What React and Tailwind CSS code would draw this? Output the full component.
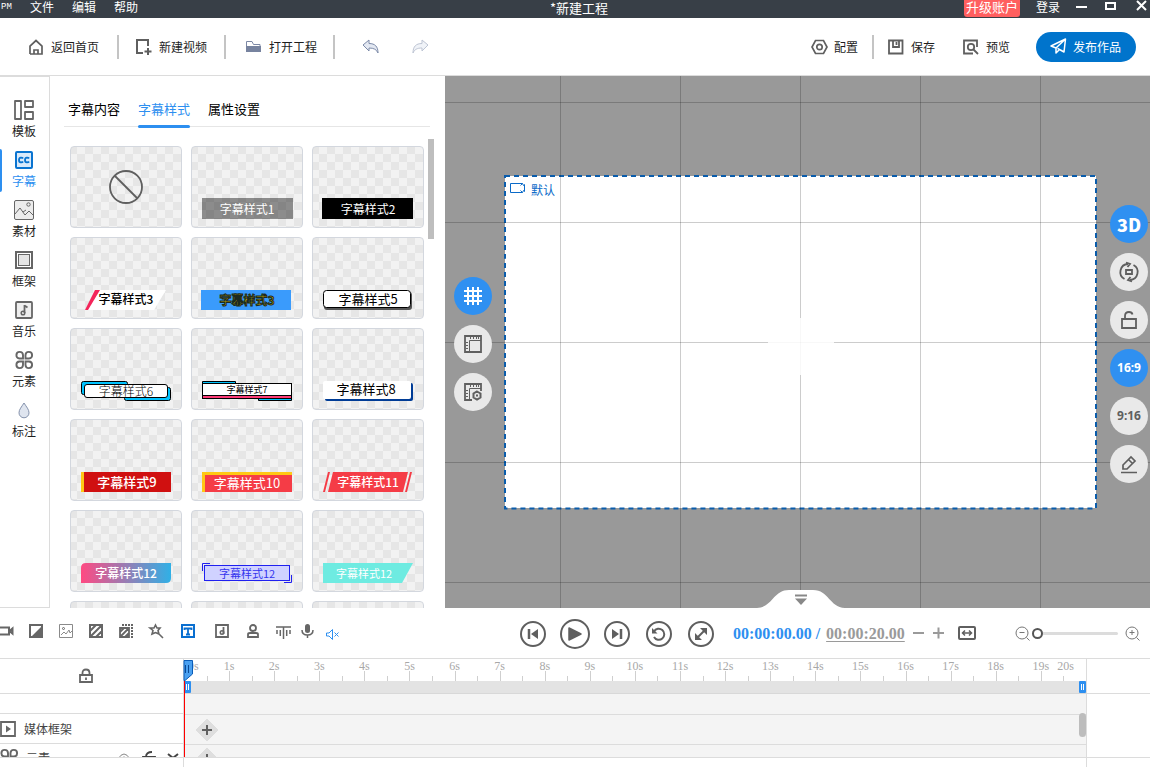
import clsx from "clsx";

const SIDE_ITEMS = [
  { label: "模板", icon: TemplateIcon },
  { label: "字幕", icon: CaptionIcon, active: true },
  { label: "素材", icon: PictureIcon },
  { label: "框架", icon: FrameIcon },
  { label: "音乐", icon: MusicIcon },
  { label: "元素", icon: ElementIcon },
  { label: "标注", icon: DropIcon },
];

const TABS = ["字幕内容", "字幕样式", "属性设置"];

const CAPTION_STYLES = [
  { none: true },
  { label: "字幕样式1", text: "text-xs leading-5 text-white", art: <rect y="-1" width="91" height="21" fill="#000" fillOpacity=".42" /> },
  { label: "字幕样式2", text: "text-xs leading-5 text-white", art: <rect x="-1" y="-1" width="91" height="21" fill="#000" /> },
  {
    label: "字幕样式3",
    text: "text-xs leading-[18px] font-medium text-black",
    art: (
      <>
        <path d="M17 0h68l-12 20H5z" fill="#fff" />
        <path d="M14 0h5L7 20H4z" fill="#f4255a" />
      </>
    ),
  },
  {
    label: "字幕样式3",
    text: "text-xs leading-5 font-bold text-[#c0a800] [-webkit-text-stroke:1px_#1c2a20]",
    art: <rect x="-1" width="90" height="20" fill="#3a9bfc" />,
  },
  {
    label: "字幕样式5",
    text: "text-[13px] leading-[18px] text-black",
    art: (
      <>
        <rect x="1" y="2" width="88" height="18" rx="3" fill="#555" />
        <rect x=".5" y=".5" width="87" height="17" rx="3" fill="#fff" stroke="#000" />
      </>
    ),
  },
  {
    label: "字幕样式6",
    text: "text-xs leading-5 font-light text-black",
    art: (
      <>
        <rect x=".5" y=".5" width="46" height="13" rx="2" fill="#00c3ff" stroke="#000" />
        <rect x="43.5" y="6.5" width="46" height="13" rx="2" fill="#00c3ff" stroke="#000" />
        <rect x="3.5" y="3.5" width="83" height="13" rx="2.5" fill="#fff" stroke="#000" />
      </>
    ),
  },
  {
    label: "字幕样式7",
    text: "text-[9px] leading-[18px] text-black",
    art: (
      <>
        <path d="M.5 4V.5h33V4M56.5 16v3.500h33V16" fill="#00c3ff" stroke="#000" />
        <rect x=".5" y="2.500" width="89" height="15" fill="#fff" stroke="#000" />
        <path d="M1 14.500h88v2.500H1z" fill="#ff3c78" />
        <path d="M1 14.500h88" stroke="#000" />
      </>
    ),
  },
  {
    label: "字幕样式8",
    text: "pr-1 text-[13px] leading-[16px] text-black",
    art: (
      <>
        <rect x="2" y="2" width="88" height="18" rx="2" fill="#003c96" />
        <rect width="88" height="18" rx="2" fill="#fff" />
      </>
    ),
  },
  {
    label: "字幕样式9",
    text: "pl-[2px] text-[13px] leading-5 font-medium text-white",
    art: (
      <>
        <path d="M0 0h3v20H0z" fill="#ffc814" />
        <path d="M3 0h87v20H3z" fill="#d01010" />
      </>
    ),
  },
  {
    label: "字幕样式10",
    text: "text-[13px] leading-[22px] text-white",
    art: (
      <>
        <path d="M0 0h90v20H0z" fill="#ffc814" />
        <path d="M3 3h87v17H3z" fill="#f53c46" />
      </>
    ),
  },
  {
    label: "字幕样式11",
    text: "text-xs leading-5 font-medium text-white",
    art: <path d="M5 0h2L2 20H0zM10 0h75l-5 20H5zM87 0h2l-5 20h-2z" fill="#f53c46" />,
  },
  {
    label: "字幕样式12",
    text: "text-xs leading-5 font-medium text-white",
    art: (
      <>
        <defs>
          <linearGradient id="pink-blue">
            <stop offset="0" stopColor="#ff4a82" />
            <stop offset="1" stopColor="#30b0e6" />
          </linearGradient>
        </defs>
        <path d="M5 0h85v15q0 5-5 5H0V5q0-5 5-5" fill="url(#pink-blue)" />
      </>
    ),
  },
  {
    label: "字幕样式12",
    text: "text-[11px] leading-5 text-[#3434ee]",
    art: (
      <>
        <rect x="2.500" y="2.500" width="85" height="15" fill="#d0d2ff" stroke="#2020f0" />
        <path d="M.5 8V.5H8M89.500 12v7.500H82" fill="none" stroke="#2020f0" />
      </>
    ),
  },
  {
    label: "字幕样式12",
    text: "pr-2 text-[11px] leading-5 text-white",
    art: <path d="M0 0h90L79 20H0z" fill="#6eebe1" />,
  },
  {},
  {},
  {},
];

const SECONDS = Array.from({ length: 20 }, (_, i) => i);

export default function App() {
  return (
    <div className="flex h-screen flex-col overflow-hidden bg-white font-['Noto_Sans_CJK_SC',sans-serif] text-xs text-[#1e1e1e]">
      <TitleBar />
      <Toolbar />
      <main className="flex min-h-0 flex-1">
        <Sidebar />
        <StylePanel />
        <Stage />
      </main>
      <PlayerBar />
      <Timeline />
    </div>
  );
}

function Icon({ w = 16, h = w, className, children }) {
  return (
    <svg
      width={w}
      height={h}
      viewBox={`0 0 ${w} ${h}`}
      fill="none"
      stroke="currentColor"
      className={clsx("shrink-0 overflow-visible", className)}
      aria-hidden="true"
    >
      {children}
    </svg>
  );
}

function TitleBar() {
  return (
    <header className="grid h-[18px] shrink-0 grid-cols-[1fr_auto_1fr] bg-[#383f47] text-white">
      <nav className="flex items-start gap-[18px]">
        <span className="w-3 pl-px font-['Liberation_Mono',monospace] text-[9px] leading-[14px]">PM</span>
        <button className="leading-[14px]">文件</button>
        <button className="leading-[14px]">编辑</button>
        <button className="leading-[14px]">帮助</button>
      </nav>
      <h1 className="pl-2 text-[13px] leading-[15px]">*新建工程</h1>
      <div className="flex items-start justify-end pr-[3px]">
        <button className="h-[17px] rounded-b-[3px] bg-[#ff5f5f] px-[2px] pb-1 text-[13px] leading-[13px]">升级账户</button>
        <button className="ml-4 leading-[14px]">登录</button>
        <button aria-label="最小化" className="ml-4">
          <Icon w={11} h={14}><path d="M0 7h11" strokeWidth="2" /></Icon>
        </button>
        <button aria-label="最大化" className="ml-[18px]">
          <Icon w={11} h={14}><path d="M1 3h9v6H1z" strokeWidth="2" /></Icon>
        </button>
        <button aria-label="关闭" className="ml-5">
          <Icon w={11} h={14}><path d="m1 1 9 9M10 1l-9 9" strokeWidth="2" /></Icon>
        </button>
      </div>
    </header>
  );
}

function Divider() {
  return <span className="block h-6 w-[2px] bg-[#c4c4c4]" />;
}

function Toolbar() {
  return (
    <div className="flex h-[58px] shrink-0 items-center justify-between border-b border-[#dcdcdc] pr-[14px] pl-7">
      <div className="flex items-center">
        <button className="flex items-center gap-[7px]">
          <Icon w={16} className="text-[#5f5f5f]">
            <path d="M2 15V7l6-5.500L14 7v8H2M6 15v-4h4v4" strokeWidth="1.700" />
          </Icon>
          返回首页
        </button>
        <span className="pr-[17px] pl-[18px]"><Divider /></span>
        <button className="flex items-center gap-[7px]">
          <Icon w={16} className="text-[#5f5f5f]">
            <path d="M12 7V1H1v13h6M12 9v7M8.500 12.500h7" strokeWidth="2" />
          </Icon>
          新建视频
        </button>
        <span className="pr-5 pl-[17px]"><Divider /></span>
        <button className="flex items-center gap-2">
          <Icon w={15}>
            <path d="M.5 13V2.500h5.500l1.500 3H14V8" stroke="#7c88a5" />
            <path d="M0 7h15v6H0z" fill="#77839f" stroke="none" />
          </Icon>
          打开工程
        </button>
        <span className="pr-[27px] pl-4"><Divider /></span>
        <button aria-label="撤销"><UndoIcon /></button>
        <button aria-label="重做" className="ml-[33px] opacity-50"><UndoIcon className="-scale-x-100" /></button>
      </div>
      <div className="flex items-center">
        <button className="flex items-center gap-[6px]">
          <Icon w={17} h={16} className="text-[#5f5f5f]">
            <path d="M4.500 1.500h8l3.500 6.500-3.500 6.500h-8L1 8z" strokeWidth="1.700" />
            <circle cx="8.500" cy="8" r="2.700" strokeWidth="1.700" />
          </Icon>
          配置
        </button>
        <span className="px-[14px]"><Divider /></span>
        <button className="flex items-center gap-[7px]">
          <Icon w={16} className="text-[#5f5f5f]">
            <path d="M1 1.500h13.500v13H1zM5 2v6h6V2M8.500 3v3" strokeWidth="1.800" />
          </Icon>
          保存
        </button>
        <button className="ml-7 flex items-center gap-[7px]">
          <Icon w={16} className="text-[#5f5f5f]">
            <path d="M14 8V1.500H1v13h9M10.500 10.500l4.500 4.500" strokeWidth="1.800" />
            <circle cx="8" cy="8" r="3.200" strokeWidth="1.800" />
          </Icon>
          预览
        </button>
        <button className="ml-[26px] flex h-[30px] items-center gap-[6px] rounded-full bg-[#0074cc] pr-[15px] pl-[14px] text-white">
          <Icon w={17}>
            <path d="M1 8 15.500 1l-1.500 13-4.500-2.500L6 15V10zM15.500 1 6 10M9.500 11.500l-2-1.200" strokeWidth="1.500" strokeLinejoin="round" />
          </Icon>
          发布作品
        </button>
      </div>
    </div>
  );
}

function UndoIcon({ className }) {
  return (
    <Icon w={17} h={15} className={className}>
      <path d="M1 6 7 1v3.500c6 0 9 3 9 9.500-1.500-3.500-4-5-9-5V12z" fill="#e3e8f2" stroke="#7c8aa8" />
    </Icon>
  );
}

function Sidebar() {
  return (
    <nav className="w-[50px] shrink-0 border-t border-r border-b border-[#dcdcdc] pt-5">
      {SIDE_ITEMS.map(({ label, icon: Glyph, active }) => (
        <button
          key={label}
          className={clsx("relative flex h-[50px] w-full flex-col items-center pr-[1px]", active && "text-[#2d8ff0]")}
        >
          {active && <span className="absolute top-[2px] left-0 h-[43px] w-[2px] rounded-r bg-[#2d8ff0]" />}
          <span className="flex h-[26px] items-center">
            <Glyph />
          </span>
          <span className="leading-4">{label}</span>
        </button>
      ))}
    </nav>
  );
}

function TemplateIcon() {
  return (
    <Icon w={20} className="text-[#666]">
      <path d="M1 1h6v18H1zM11 1h8v6h-8zM11 12h8v7h-8z" strokeWidth="1.800" strokeLinejoin="round" />
    </Icon>
  );
}

function CaptionIcon() {
  return (
    <Icon w={18}>
      <rect x="1" y="1" width="16" height="16" rx="1" fill="#d9eafb" stroke="#0a74d0" strokeWidth="2" />
      <path d="M8 7.500C7.500 6.500 4 5.500 4 9s3.500 2.500 4 1.500M14 7.500c-.5-1-4-2-4 1.500s3.500 2.500 4 1.500" stroke="#0a74d0" strokeWidth="1.800" />
    </Icon>
  );
}

function PictureIcon() {
  return (
    <Icon w={20} className="text-[#666]">
      <rect x=".5" y=".5" width="19" height="19" rx="1.500" fill="#ececec" />
      <path d="m1 14 5-6 5 7 4-4 4 4M9 12l3-2" />
      <circle cx="14.500" cy="4.500" r="1.700" />
    </Icon>
  );
}

function FrameIcon() {
  return (
    <Icon w={18} className="text-[#666]">
      <rect x="1" y="1" width="16" height="16" strokeWidth="2" />
      <rect x="3.500" y="3.500" width="11" height="11" fill="#e4e4e4" />
    </Icon>
  );
}

function MusicIcon() {
  return (
    <Icon w={18} className="text-[#666]">
      <rect x="1" y="1" width="16" height="16" rx="1" fill="#eee" strokeWidth="1.800" />
      <path d="M9.500 12V4M9.500 4.500l3 2" strokeWidth="1.800" />
      <circle cx="8" cy="12" r="1.800" strokeWidth="1.500" />
    </Icon>
  );
}

function ElementIcon() {
  return (
    <Icon w={18} className="text-[#666]">
      <path
        d="M8 7.500H4.500A3.300 3.300 0 1 1 8 4zM10.500 7.500V4a3.300 3.300 0 1 1 3.500 3.500zM8 10.500V14a3.300 3.300 0 1 1-3.500-3.500zM10.500 10.500H14a3.300 3.300 0 1 1-3.500 3.500z"
        strokeWidth="1.900"
      />
    </Icon>
  );
}

function DropIcon() {
  return (
    <Icon w={12} h={17}>
      <path d="M6 1c2.500 4 5 6.500 5 9.800a5 5 0 0 1-10 0C1 7.500 3.500 5 6 1z" fill="#dfe5ef" stroke="#8391ab" />
    </Icon>
  );
}

function StylePanel() {
  return (
    <section className="relative flex w-[395px] shrink-0 flex-col overflow-hidden pr-[15px] pl-[14px]">
      <div role="tablist" className="flex h-[51px] shrink-0 items-end gap-[18px] border-b border-[#e6e6e6] px-1">
        {TABS.map((tab, i) => (
          <button
            key={tab}
            role="tab"
            aria-selected={i === 1}
            className={clsx(
              "relative h-[34px] pt-2 pb-2 text-[13px] leading-[18px]",
              i === 1 ? "text-[#2d8ff0]" : "text-black"
            )}
          >
            {tab}
            {i === 1 && <span className="absolute -bottom-[2px] left-0 h-[3px] w-full rounded-full bg-[#2d8ff0]" />}
          </button>
        ))}
      </div>
      <div className="grid min-h-0 flex-1 auto-rows-[82px] grid-cols-3 gap-[9px] overflow-hidden pt-[19px] pr-[6px] pl-[6px]">
        {CAPTION_STYLES.map((style, i) => (
          <StyleCard key={i} {...style} />
        ))}
      </div>
      <span className="absolute top-[63px] right-[11px] h-[100px] w-[6px] bg-[#bebebe]" />
    </section>
  );
}

function StyleCard({ none, label, text, art }) {
  return (
    <button
      aria-label={label ?? "无样式"}
      className="flex justify-center rounded border border-[#d3d7de] bg-[repeating-conic-gradient(#e6e6e6_0_25%,#f2f2f2_0_50%)] bg-[length:16px_16px] bg-[position:14px_7px]"
    >
      {none && (
        <Icon w={36} className="mt-[22px] text-[#5f5f5f]">
          <circle cx="18" cy="18" r="16" strokeWidth="1.800" />
          <path d="m6.500 6.500 23 23" strokeWidth="1.800" />
        </Icon>
      )}
      {art && (
        <span className="relative mt-[52px] block h-5 w-[90px]">
          <Icon w={90} h={20} className="absolute inset-0">
            <g stroke="none">{art}</g>
          </Icon>
          <span className={clsx("relative block", text)}>{label}</span>
        </span>
      )}
    </button>
  );
}

function RoundButton({ label, active, children }) {
  return (
    <button
      aria-label={label}
      className={clsx(
        "flex size-[38px] items-center justify-center rounded-full",
        active ? "bg-[#2f90f1] text-white" : "bg-[#e9e9e9] text-[#5f5f5f]"
      )}
    >
      {children}
    </button>
  );
}

function Stage() {
  return (
    <section className="relative flex min-w-0 flex-1 items-center bg-[#999] pr-[2px] pl-[9px]">
      <div className="relative z-20 flex flex-col gap-[10px] pt-1">
        <RoundButton label="网格" active>
          <Icon w={18}><path d="M4 0v18M9 0v18M14 0v18M0 4h18M0 9h18M0 14h18" strokeWidth="2" /></Icon>
        </RoundButton>
        <RoundButton label="标尺"><RulerIcon /></RoundButton>
        <RoundButton label="标尺设置"><RulerIcon gear /></RoundButton>
      </div>
      <div className="relative mr-[14px] ml-[13px] aspect-video flex-1 bg-white">
        <svg className="absolute inset-0 size-full overflow-visible" aria-hidden="true">
          <rect width="100%" height="100%" fill="none" stroke="#0a5cab" strokeWidth="2" strokeDasharray="5 4" />
        </svg>
        <span className="flex items-center gap-[6px] pt-[5px] pl-[5px] leading-[18px] text-[#0a6ac8]">
          <Icon w={15} h={14}><path d="M.5 .5h12l1 2 1-1v7l-1-1-1 2H.5zM12.500 .5l-2 2M12.500 9.500l-2-2" /></Icon>
          默认
        </span>
      </div>
      <div className="relative z-20 flex flex-col gap-[10px] pt-1">
        <RoundButton label="3D" active><span className="text-lg font-black">3D</span></RoundButton>
        <RoundButton label="旋转">
          <Icon w={20}>
            <path d="M5.500 17A8 8 0 0 1 9 2M14.500 3A8 8 0 0 1 11 18M7 .5 11 2 8.500 5M13 19.500 9 18l2.500-3M7 8h6v4H7z" strokeWidth="1.800" />
          </Icon>
        </RoundButton>
        <RoundButton label="锁定">
          <Icon w={18}><path d="M2 8h14v9H2zM5 8V5q0-4 4-4 3 0 3.500 2.500" strokeWidth="1.800" /></Icon>
        </RoundButton>
        <RoundButton label="16:9" active><span className="font-['Noto_Sans',sans-serif] font-bold">16:9</span></RoundButton>
        <RoundButton label="9:16"><span className="font-['Noto_Sans',sans-serif] font-bold">9:16</span></RoundButton>
        <RoundButton label="编辑">
          <Icon w={18}><path d="M1 17.500h16M3 14V10L11 2l4 4-8 8zM8.500 4.500l4 4" strokeWidth="1.700" /></Icon>
        </RoundButton>
      </div>
      <div className="pointer-events-none absolute inset-0 z-10 bg-[linear-gradient(to_right,rgba(0,0,0,0.2)_1px,transparent_1px),linear-gradient(to_bottom,rgba(0,0,0,0.2)_1px,transparent_1px)] bg-[length:120px_120px] bg-[position:115px_26px]" />
      <div className="pointer-events-none absolute inset-0 z-10 flex items-center justify-center pl-[6px]">
        <Icon w={66} className="text-white">
          <path d="M0 33h66M33 9v57" strokeWidth="7" strokeOpacity=".85" />
        </Icon>
      </div>
      <button aria-label="收起" className="absolute bottom-0 left-1/2 z-20 -translate-x-[41px]">
        <Icon w={88} h={18}>
          <path d="M0 18C16 17 16 0 32 0h24C72 0 72 17 88 18z" fill="#fff" stroke="none" />
          <path d="M38 5.500h12" strokeWidth="2" className="text-[#888]" />
          <path d="M38 8.500h12L44 15z" fill="#888" stroke="none" />
        </Icon>
      </button>
    </section>
  );
}

function RulerIcon({ gear }) {
  return (
    <Icon w={18}>
      <path d={gear ? "M17 8V1H1v16h7" : "M1 1h16v16H1z"} strokeWidth="1.800" />
      <path d="M5.500 5.500V17M5.500 5.500H17M6.500 2v2M9.500 2v2M12.500 2v2M14.500 2v2M2 7.500h2M2 10.500h2M2 13.500h2" />
      {gear && <path d="m13 8.500 3.500 2v4L13 16.500l-3.500-2v-4zM12 12.500h2" strokeWidth="2" fill="#e9e9e9" />}
    </Icon>
  );
}

function TrackTools() {
  return (
    <div className="flex h-full w-[520px] items-center pb-1 text-[#666]">
      <button aria-label="视频">
        <Icon w={14}><path d="M0 3.500h9v7H0M9.500 7l3-2.500v5z" strokeWidth="2" /></Icon>
      </button>
      <button aria-label="转场" className="ml-[15px]">
        <Icon w={14}><path d="M1 1h12v12H1z" strokeWidth="2" /><path d="M12 3v9H3z" fill="currentColor" stroke="none" /></Icon>
      </button>
      <button aria-label="图片" className="ml-4">
        <Icon w={14}><path d="M.5.5h13v13H.5zM2 11l3-3 2 2 3-4 1 3 2-2" stroke="#8a8a8a" /><circle cx="4.500" cy="4.500" r="1" /></Icon>
      </button>
      <button aria-label="滤镜" className="ml-4">
        <Icon w={14}><path d="M1 1h12v12H1zM1 7l6-6M1 13 13 1M7 13l6-6" strokeWidth="2" /></Icon>
      </button>
      <button aria-label="叠加" className="ml-4">
        <Icon w={14}>
          <path d="M1 4h9v9H1zM1 8l4-4M1 13l9-9M6 13l4-4" strokeWidth="1.800" />
          <path d="M3 1h11M13 3v11" strokeWidth="2" strokeDasharray="2 1" />
        </Icon>
      </button>
      <button aria-label="特效" className="ml-4">
        <Icon w={15}><path d="m6.500 1 1.500 3h3L9 6.500l1 3.500-3.500-1.500L3 10l1-3.500L1 4h4zM9.500 9.500 14 14" strokeWidth="1.600" /></Icon>
      </button>
      <button aria-label="文字" className="ml-[17px]">
        <Icon w={14} className="text-[#0a6fd0]">
          <path d="M1 1h12v12H1z" strokeWidth="2" /><path d="M3.500 6V4.500h7V6M7 4v6.500M5 10.500h4" strokeWidth="1.800" />
        </Icon>
      </button>
      <button aria-label="音乐" className="ml-5">
        <Icon w={14}><path d="M1 1h12v12H1zM8.500 10V3" strokeWidth="1.800" /><circle cx="7" cy="8.500" r="1.700" strokeWidth="1.600" /></Icon>
      </button>
      <button aria-label="人物" className="ml-[18px]">
        <Icon w={12} h={14}><circle cx="6" cy="4" r="3" strokeWidth="1.800" /><path d="M1 13v-2.500Q1 9 3 9h6q2 0 2 1.500V13z" strokeWidth="1.800" /></Icon>
      </button>
      <button aria-label="音频" className="ml-[17px]">
        <Icon w={15}><path d="M0 3h15M1 6v4M4.300 6v6M7.500 3v12M10.700 6v6M14 6v4" strokeWidth="1.500" /></Icon>
      </button>
      <button aria-label="录音" className="ml-[10px]">
        <Icon w={13} h={14}><rect x="4" y="0" width="5" height="9" rx="2.500" fill="currentColor" stroke="none" /><path d="M1 6q0 5 5.500 5T12 6M6.500 11v3" strokeWidth="1.500" /></Icon>
      </button>
      <button aria-label="静音" className="ml-3 pt-[6px] text-[#2d8ff0]">
        <Icon w={13} h={11}><path d="M.5 4h2.500L6.500.5v10L3 7H.5zM8.500 3.500l4 4M12.500 3.500l-4 4" /></Icon>
      </button>
    </div>
  );
}

function PlayerButton({ label, big, children }) {
  return (
    <button
      aria-label={label}
      className={clsx(
        "flex items-center justify-center rounded-full border-2 border-[#5f5f5f] text-[#5f5f5f]",
        big ? "-mx-[2px] size-[30px]" : "size-[26px]"
      )}
    >
      {children}
    </button>
  );
}

function PlayerBar() {
  return (
    <div className="flex h-[51px] shrink-0 items-center border-b border-[#dcdcdc] pr-[10px]">
      <TrackTools />
      <div className="flex items-center gap-4 pt-[2px]">
        <PlayerButton label="上一帧">
          <Icon w={12} h={10}><path d="M2 0v10" strokeWidth="2.500" /><path d="M11 0v10L4 5z" fill="currentColor" stroke="none" /></Icon>
        </PlayerButton>
        <PlayerButton label="播放" big>
          <Icon w={14}><path d="M1 1v12l12-6z" fill="currentColor" strokeWidth="1.500" strokeLinejoin="round" /></Icon>
        </PlayerButton>
        <PlayerButton label="下一帧">
          <Icon w={12} h={10}><path d="M10 0v10" strokeWidth="2.500" /><path d="M1 0v10l7-5z" fill="currentColor" stroke="none" /></Icon>
        </PlayerButton>
        <PlayerButton label="重播">
          <Icon w={14}><path d="M2 4.500A5.500 5.500 0 1 1 2 10" strokeWidth="2" /><path d="M0 1v5.500h5.500z" fill="currentColor" stroke="none" /></Icon>
        </PlayerButton>
        <PlayerButton label="全屏">
          <Icon w={12}><path d="m2.500 9.500 7-7" strokeWidth="2" /><path d="M5 0h7v7zM0 5v7h7z" fill="currentColor" stroke="none" /></Icon>
        </PlayerButton>
      </div>
      <div className="ml-[19px] flex items-center pt-[1px] font-['Liberation_Serif',serif] text-base leading-4 font-bold text-[#9a9a9a]">
        <span className="text-[#2d8ff0]">00:00:00.00&nbsp;/</span>
        <span className="ml-[6px] underline underline-offset-2">00:00:20.00</span>
      </div>
      <button aria-label="减少" className="ml-2 text-[#9a9a9a]">
        <Icon w={11} h={12}><path d="M0 6h11" strokeWidth="2" /></Icon>
      </button>
      <button aria-label="增加" className="ml-[9px] text-[#9a9a9a]">
        <Icon w={11} h={12}><path d="M0 6h11M5.500 .5v11" strokeWidth="2" /></Icon>
      </button>
      <button aria-label="适应窗口" className="ml-[14px] text-[#5f5f5f]">
        <Icon w={18} h={16}>
          <rect x="1" y="2" width="16" height="12" rx="1" strokeWidth="2" />
          <path d="M4 8h10M7 5.500 4.500 8 7 10.500M11 5.500 13.500 8 11 10.500" strokeWidth="1.500" />
        </Icon>
      </button>
      <div className="ml-auto flex items-center text-[#777]">
        <button aria-label="缩小">
          <Icon w={15}><circle cx="7" cy="7" r="6" /><path d="M4.500 6.500h5M11.500 11.500l3 3" /></Icon>
        </button>
        <input
          type="range"
          aria-label="时间轴缩放"
          min="0"
          max="100"
          defaultValue="0"
          className="ml-[2px] h-3 w-[86px] appearance-none bg-transparent [&::-webkit-slider-runnable-track]:h-[3px] [&::-webkit-slider-runnable-track]:rounded-full [&::-webkit-slider-runnable-track]:bg-[#dcdcdc] [&::-webkit-slider-thumb]:-mt-1 [&::-webkit-slider-thumb]:size-[11px] [&::-webkit-slider-thumb]:appearance-none [&::-webkit-slider-thumb]:rounded-full [&::-webkit-slider-thumb]:border-2 [&::-webkit-slider-thumb]:border-solid [&::-webkit-slider-thumb]:border-[#555] [&::-webkit-slider-thumb]:bg-white"
        />
        <button aria-label="放大" className="ml-[7px]">
          <Icon w={15}><circle cx="7" cy="7" r="6" /><path d="M4.500 6.500h5M7 4v5M11.500 11.500l3 3" /></Icon>
        </button>
      </div>
    </div>
  );
}

function AddMark() {
  return (
    <button aria-label="添加" className="ml-[11px] block text-[#5f5f5f]">
      <Icon w={24}>
        <path d="m12 1 11 11-11 11L1 12z" fill="#dedede" stroke="#dedede" strokeLinejoin="round" />
        <path d="M12 7v10M7 12h10" strokeWidth="2" />
      </Icon>
    </button>
  );
}

function RangeHandle() {
  return (
    <Icon w={7} h={12}>
      <rect width="7" height="12" rx="1" fill="#2d8ff0" stroke="none" />
      <path d="M2.500 3v6M4.500 3v6" stroke="#fff" />
    </Icon>
  );
}

function Timeline() {
  return (
    <div className="grid h-[108px] shrink-0 grid-cols-[184px_1fr_63px]">
      <div className="border-r border-[#dcdcdc] text-[#444]">
        <div className="flex h-[35px] items-center border-b border-[#dcdcdc] pl-[79px] text-[#666]">
          <Icon w={14}><path d="M1 6h12v7H1zM3.500 6V4Q3.500 .5 7 .5T10.500 4v2M7 8.500V11" strokeWidth="1.800" /></Icon>
        </div>
        <div className="h-5 border-b border-[#dcdcdc]" />
        <div className="flex h-[30px] items-center gap-2 border-b border-[#dcdcdc]">
          <Icon w={16} className="text-[#666]">
            <path d="M1 1h14v14H1z" strokeWidth="1.800" /><path d="M6 4.500v7l5-3.500z" fill="currentColor" stroke="none" />
          </Icon>
          媒体框架
        </div>
        <div className="h-[14px] overflow-hidden border-b border-[#dcdcdc]">
          <div className="flex h-7 items-center">
            <ElementIcon />
            <span className="ml-2">元素</span>
            <Icon w={14} className="ml-[67px] text-[#888]"><path d="M1 8q6-10 12 0-6 9-12 0z" /><circle cx="7" cy="8" r="2" /></Icon>
            <Icon w={14} className="ml-[11px]"><path d="M1 6h12v7H1zM4 6q0-5 6-5" strokeWidth="1.800" /></Icon>
            <Icon w={10} className="ml-3"><path d="m0 1 5 4 5-4" strokeWidth="2" /></Icon>
          </div>
        </div>
      </div>
      <div className="relative border-r border-[#dcdcdc]">
        <div className="flex h-[22px] font-['Liberation_Serif',serif] text-[#a8a8a8]">
          {SECONDS.map((s) => (
            <div key={s} className="relative flex flex-1 items-end">
              <span className={clsx("absolute top-0 left-0 leading-[14px]", s > 0 ? "-translate-x-1/2" : "pl-1")}>{s}s</span>
              <span className={clsx("w-px", s > 0 && "h-[10px] bg-[#cfcfcf]")} />
              <span className="flex-1" />
              <span className="h-[5px] w-px bg-[#cfcfcf]" />
              <span className="flex-1" />
            </div>
          ))}
          <span className="absolute top-0 right-3 leading-[14px]">20s</span>
        </div>
        <div className="flex h-[13px] justify-between border-b border-[#d8d8d8] bg-[#e3e3e3]">
          <RangeHandle />
          <RangeHandle />
        </div>
        <div className="h-[21px] border-b border-[#dcdcdc] bg-[#f4f4f4]" />
        <div className="flex h-[30px] items-center border-b border-[#dcdcdc] bg-[#f4f4f4]">
          <AddMark />
        </div>
        <div className="h-[13px] overflow-hidden border-b border-[#dcdcdc] bg-[#f4f4f4] pt-[2px]">
          <AddMark />
        </div>
        <span className="absolute top-[54px] right-0 h-6 w-[7px] rounded-sm bg-[#bdbdbd]" />
        <span className="absolute top-[22px] left-0 h-[76px] w-px bg-[#f00]" />
        <Icon w={9} h={21} className="absolute top-[1px] left-0">
          <path d="M0 .5h8.500V14L1 20.500H0z" fill="#4aa0f0" stroke="#0a5cb8" />
          <path d="M1.500 5v8M4.500 5v8" stroke="#0a4a96" />
        </Icon>
      </div>
      <div>
        <div className="h-[35px] border-b border-[#dcdcdc]" />
        <div className="h-16 border-b border-[#dcdcdc]" />
      </div>
    </div>
  );
}
